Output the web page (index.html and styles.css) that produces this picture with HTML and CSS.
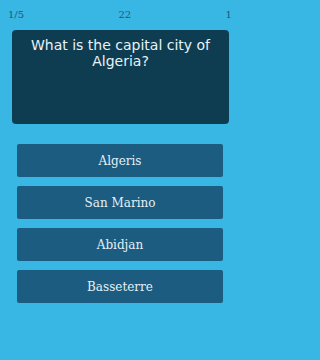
FILE: index.html
```html
<!DOCTYPE html>
<html>
<head>
<meta charset="utf-8">
<link rel="stylesheet" href="styles.css">
</head>
<body>
<div class="app">
  <div class="header">
    <span class="stat">1/5</span>
    <span class="stat">22</span>
    <span class="stat">1</span>
  </div>
  <div class="question">What is the capital city of Algeria?</div>
  <div class="answers">
    <div class="answer">Algeris</div>
    <div class="answer">San Marino</div>
    <div class="answer">Abidjan</div>
    <div class="answer">Basseterre</div>
  </div>
</div>
</body>
</html>
```
FILE: styles.css
```css
html, body {
  margin: 0;
  padding: 0;
  background: #38b6e4;
}
.app {
  width: 240px;
  height: 360px;
  display: flex;
  flex-direction: column;
}
.header {
  height: 30px;
  padding: 0 8px;
  display: flex;
  justify-content: space-between;
  align-items: center;
  box-sizing: border-box;
}
.stat {
  font-family: "DejaVu Serif", serif;
  font-size: 10px;
  line-height: 12px;
  margin-top: -1px;
  color: #1a5a80;
}
.question {
  margin: 0 11px 0 12px;
  height: 94px;
  box-sizing: border-box;
  padding: 7px 8px 0;
  background: #0e3d52;
  border-radius: 4px;
  color: #e8f2f6;
  font-family: "DejaVu Sans", sans-serif;
  font-size: 14px;
  line-height: 16px;
  text-align: center;
}
.answers {
  margin: 20px 17px 0;
  display: flex;
  flex-direction: column;
  gap: 9px;
}
.answer {
  height: 33px;
  background: #1b5c80;
  border-radius: 2px;
  color: #e6f0f6;
  font-family: "DejaVu Serif", serif;
  font-size: 12px;
  display: flex;
  align-items: center;
  justify-content: center;
}
```
